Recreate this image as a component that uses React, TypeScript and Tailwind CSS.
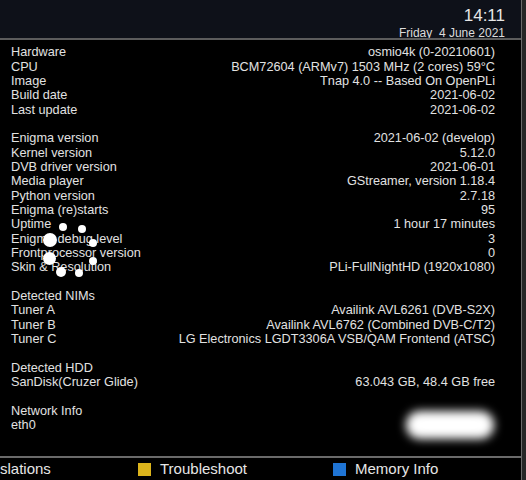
import React from "react";

type Row = [string, string] | null;

const rows: Row[] = [
  ["Hardware", "osmio4k (0-20210601)"],
  ["CPU", "BCM72604 (ARMv7) 1503 MHz (2 cores) 59°C"],
  ["Image", "Tnap 4.0 -- Based On OpenPLi"],
  ["Build date", "2021-06-02"],
  ["Last update", "2021-06-02"],
  null,
  ["Enigma version", "2021-06-02 (develop)"],
  ["Kernel version", "5.12.0"],
  ["DVB driver version", "2021-06-01"],
  ["Media player", "GStreamer, version 1.18.4"],
  ["Python version", "2.7.18"],
  ["Enigma (re)starts", "95"],
  ["Uptime", "1 hour 17 minutes"],
  ["Enigma debug level", "3"],
  ["Frontprocessor version", "0"],
  ["Skin & Resolution", "PLi-FullNightHD (1920x1080)"],
  null,
  ["Detected NIMs", ""],
  ["Tuner A", "Availink AVL6261 (DVB-S2X)"],
  ["Tuner B", "Availink AVL6762 (Combined DVB-C/T2)"],
  ["Tuner C", "LG Electronics LGDT3306A VSB/QAM Frontend (ATSC)"],
  null,
  ["Detected HDD", ""],
  ["SanDisk(Cruzer Glide)", "63.043 GB, 48.4 GB free"],
  null,
  ["Network Info", ""],
  ["eth0", ""],
];

// spinner dots: x, y, size
const dots: [number, number, number][] = [
  [63, 227, 8],
  [82, 229, 8],
  [50, 240, 14],
  [93, 243, 8],
  [49, 258, 13],
  [93, 261, 8],
  [61, 272, 10],
  [79, 273, 8],
];

export default function App() {
  return (
    <div
      className="relative flex h-[480px] w-[526px] overflow-hidden bg-black text-[#e2e2e2]"
      style={{ fontFamily: '"Liberation Sans", Arial, sans-serif' }}
    >
      <div className="flex flex-1 flex-col">
        <header className="flex h-[38px] flex-col items-end bg-[#0e1119] pr-[16px] pt-[6px]">
          <div className="text-[17px] leading-[20px] text-[#e6e6e6]">14:11</div>
          <div className="mt-[1px] whitespace-pre text-[12px] leading-[12px] text-[#dcdcdc]">Friday  4 June 2021</div>
        </header>
        <div className="relative h-[2px] bg-[#5c5c5c]" />
        <main className="flex flex-1 flex-col pl-[11px] pr-[26px] pt-[5px] text-[12.7px]">
          {rows.map((r, i) =>
            r ? (
              <div key={i} className="flex h-[14.35px] items-center justify-between leading-[14px] whitespace-nowrap">
                <span>{r[0]}</span>
                <span>{r[1]}</span>
              </div>
            ) : (
              <div key={i} className="h-[14.35px]" />
            )
          )}
        </main>
        <div className="h-[2px] bg-[#6a6a6a]" />
        <footer className="flex h-[22px] items-center text-[15px] text-[#e6e6e6]">
          <span className="w-[138px]">slations</span>
          <span className="h-[13px] w-[13px] bg-[#dcb41c]" />
          <span className="ml-[9px] w-[173px]">Troubleshoot</span>
          <span className="h-[13px] w-[13px] bg-[#1f74d4]" />
          <span className="ml-[9px]">Memory Info</span>
        </footer>
      </div>
      <div className="w-[5px] border-l border-[#6a6a6a] bg-[#262626]" />

      {dots.map(([x, y, s], i) => (
        <div
          key={i}
          className="absolute rounded-full bg-white"
          style={{ left: x - s / 2, top: y - s / 2, width: s, height: s }}
        />
      ))}
      <div className="absolute left-[406px] top-[411px] h-[28px] w-[88px] rounded-full bg-white blur-[5px]" />
    </div>
  );
}
